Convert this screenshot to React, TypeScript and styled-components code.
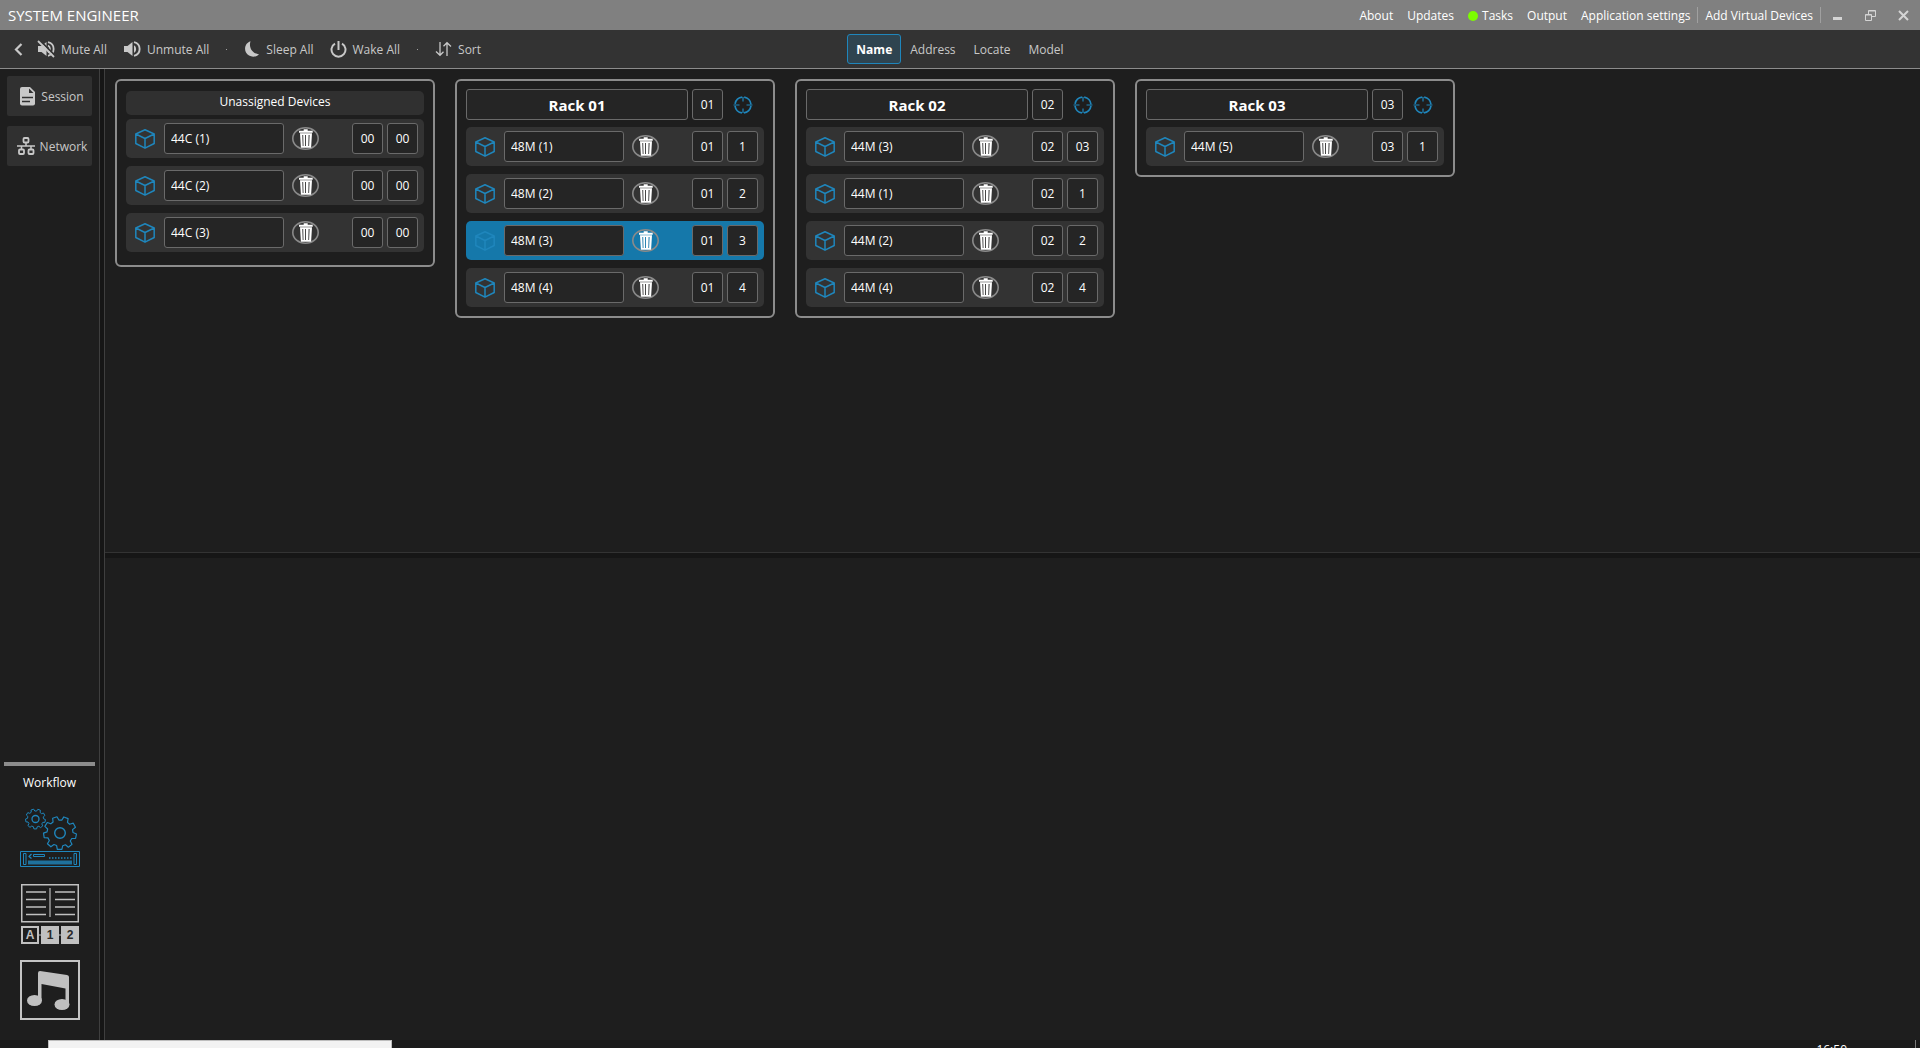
import React from "react";
import styled, { createGlobalStyle, css } from "styled-components";

const color = {
  page: "#1e1e1e",
  bar: "#333333",
  title: "#808080",
  field: "#252525",
  fieldBorder: "#6a6a6a",
  frame: "#8c8c8c",
  accent: "#1f86bc",
  selected: "#1578aa",
  line: "#3f3f3f",
  gutter: "#161616",
  text: "#ffffff",
  muted: "#c8c8c8",
};

const Global = createGlobalStyle`
  * { box-sizing: border-box; }
  html, body { margin: 0; background: ${color.page}; }
  body, button, input {
    font-family: "Open Sans", "Noto Sans", sans-serif;
    font-size: 12px;
    line-height: 16px;
    color: ${color.text};
  }
  svg { display: block; flex: none; }
`;

const Window = styled.div`
  display: flex;
  flex-direction: column;
  height: 100vh;
  overflow: hidden;
`;

/* Title bar */

const TitleBar = styled.header`
  display: flex;
  align-items: center;
  justify-content: space-between;
  flex: none;
  height: 30px;
  padding-left: 8px;
  background: ${color.title};
`;

const AppTitle = styled.h1`
  margin: 0;
  font-size: 15px;
  line-height: 20px;
  font-weight: 400;
`;

const Menu = styled.nav`
  display: flex;
  align-items: center;
`;

const MenuItem = styled.button`
  display: flex;
  align-items: center;
  gap: 4px;
  padding: 2px 7px 0;
  border: 0;
  background: none;
  white-space: nowrap;
`;

const StatusDot = styled.span`
  width: 10px;
  height: 10px;
  border-radius: 50%;
  background: #7cfc00;
`;

const MenuDivider = styled.span`
  width: 1px;
  height: 16px;
  background: #a0a0a0;
`;

const WindowButton = styled.button`
  display: flex;
  align-items: center;
  justify-content: center;
  width: 33px;
  height: 30px;
  padding: 0;
  border: 0;
  background: none;
  color: #d4d4d4;
`;

/* Toolbar */

const Toolbar = styled.div`
  display: grid;
  grid-template-columns: 1fr auto 1fr;
  align-items: center;
  flex: none;
  height: 39px;
  padding: 0 8px;
  background: ${color.bar};
  border-bottom: 1px solid ${color.frame};
`;

const Actions = styled.div`
  display: flex;
  align-items: center;
`;

const ActionButton = styled.button`
  display: flex;
  align-items: center;
  gap: 6px;
  padding: 0 8px;
  border: 0;
  background: none;
  color: ${color.muted};
  white-space: nowrap;
`;

const BackButton = styled(ActionButton)`
  padding: 0 6px;
`;

const Label = styled.span`
  padding-top: 2px;
`;

const Dot = styled.span`
  width: 1px;
  height: 1px;
  margin: 0 9px;
  background: #a0a0a0;
`;

const Tabs = styled.div`
  display: flex;
  align-items: center;
`;

const Tab = styled.button<{ $active?: boolean }>`
  height: 30px;
  padding: 2px 8px 0;
  border: 1px solid transparent;
  border-radius: 3px;
  background: none;
  color: ${color.muted};
  ${(p) =>
    p.$active &&
    css`
      border-color: ${color.accent};
      background: #2f4450;
      color: ${color.text};
      font-weight: 700;
    `}
`;

/* Body */

const Body = styled.div`
  display: flex;
  flex: 1;
  min-height: 0;
`;

const Sidebar = styled.aside`
  display: flex;
  flex-direction: column;
  flex: none;
  width: 99px;
  padding: 7px 4px 20px;
`;

const SideNav = styled.nav`
  display: flex;
  flex-direction: column;
  gap: 10px;
  padding: 0 3px;
`;

const SideButton = styled.button`
  display: flex;
  align-items: center;
  justify-content: center;
  gap: 5px;
  height: 40px;
  padding: 0 0 0 5px;
  border: 0;
  border-radius: 2px;
  background: #303030;
  color: ${color.muted};
`;

const Workflow = styled.section`
  display: flex;
  flex-direction: column;
  align-items: center;
  margin-top: auto;
  border-top: 4px solid ${color.frame};
`;

const WorkflowTitle = styled.h2`
  margin: 9px 0 17px;
  font-size: 12px;
  line-height: 16px;
  font-weight: 400;
`;

const WorkflowList = styled.div`
  display: flex;
  flex-direction: column;
  gap: 16px;
`;

const WorkflowButton = styled.button`
  padding: 0;
  border: 0;
  background: none;
`;

const SideGutter = styled.div`
  flex: none;
  width: 6px;
  border: solid ${color.line};
  border-width: 0 1px;
  background: ${color.gutter};
`;

const Main = styled.main`
  display: grid;
  grid-template-rows: minmax(0, 1fr) 6px minmax(0, 1fr);
  flex: 1;
  min-width: 0;
`;

const RackArea = styled.section`
  display: flex;
  flex-wrap: wrap;
  align-items: flex-start;
  align-content: flex-start;
  gap: 20px;
  padding: 10px;
`;

const RowGutter = styled.div`
  border-top: 1px solid #333333;
  background: ${color.gutter};
`;

const DetailArea = styled.section`
  background: ${color.page};
`;

/* Racks */

const Card = styled.article<{ $plain?: boolean }>`
  width: 320px;
  padding: ${(p) => (p.$plain ? "10px 9px 13px" : "8px 9px 9px")};
  border: 2px solid ${color.frame};
  border-radius: 6px;
`;

const PlainHeader = styled.h3`
  margin: 0 0 4px;
  padding: 3px 0 5px;
  border-radius: 5px;
  background: #303030;
  font-size: 12px;
  line-height: 16px;
  font-weight: 400;
  text-align: center;
`;

const RackHeader = styled.div`
  display: flex;
  align-items: center;
  gap: 4px;
  margin-bottom: 7px;
`;

const Field = styled.input`
  height: 31px;
  padding: 0 6px;
  border: 1px solid ${color.fieldBorder};
  border-radius: 3px;
  background: ${color.field};
  outline: none;
`;

const RackName = styled(Field)`
  flex: 1;
  min-width: 0;
  font-size: 15px;
  font-weight: 700;
  text-align: center;
`;

const DeviceName = styled(Field)`
  width: 120px;
`;

const NumberField = styled(Field)`
  width: 31px;
  padding: 0;
  text-align: center;
`;

const IconButton = styled.button`
  display: flex;
  align-items: center;
  justify-content: center;
  padding: 0;
  border: 0;
  background: none;
`;

const LocateButton = styled(IconButton)`
  width: 31px;
  height: 31px;
  margin-right: 6px;
`;

const DeviceList = styled.ul`
  display: flex;
  flex-direction: column;
  gap: 8px;
  margin: 0;
  padding: 0;
  list-style: none;
`;

const DeviceRow = styled.li<{ $selected?: boolean }>`
  display: flex;
  align-items: center;
  gap: 8px;
  padding: 4px 6px 4px 9px;
  border-radius: 5px;
  background: ${(p) => (p.$selected ? color.selected : color.bar)};
`;

const Address = styled.div`
  display: flex;
  gap: 4px;
  margin-left: auto;
`;

/* Strip under the window */

const Taskbar = styled.footer`
  display: flex;
  align-items: flex-start;
  justify-content: space-between;
  flex: none;
  height: 8px;
  padding: 0 4px 0 48px;
  overflow: hidden;
  background: #1a1a1a;
`;

const SearchBox = styled.input`
  width: 344px;
  height: 32px;
  border: 1px solid #bdbdbd;
  background: #f2f2f2;
  outline: none;
`;

const Tray = styled.div`
  height: 40px;
  padding-right: 68px;
  border-right: 1px solid #7a7a7a;
`;

const Clock = styled.time`
  display: block;
  padding-top: 2px;
`;

/* Icons */

const MuteIcon = () => (
  <svg width="18" height="18" viewBox="0 0 18 18" fill="none" stroke="currentColor" strokeWidth="1.800">
    <path d="M1 6h3.500L9.500 2v14L4.500 12H1z" fill="currentColor" stroke="none" />
    <path d="M11 5.500c2.600 1.500 2.600 5.500 0 7M11 2.200c7.500 1.800 7.500 11.800 0 13.600" />
    <path d="M2.500 0l15.500 15.500" stroke={color.bar} strokeWidth="1.800" />
    <path d="M1 1l16 16" />
  </svg>
);

const UnmuteIcon = () => (
  <svg width="18" height="18" viewBox="0 0 18 18" fill="none" stroke="currentColor">
    <path d="M1 6h3.500L9.500 2v14L4.500 12H1z" fill="currentColor" stroke="none" />
    <path d="M11 5.200c2.800 1.400 2.800 6.200 0 7.600z" fill="currentColor" stroke="none" />
    <path d="M11 2.200c7.500 1.800 7.500 11.800 0 13.600" strokeWidth="1.900" />
  </svg>
);

const MoonIcon = () => (
  <svg width="16" height="16" viewBox="0 0 16 16" fill="currentColor">
    <path d="M6.500.3C4.500 6 8 13 15 13.200 11.500 17 4.500 16.300 2 11.500-.3 7 1.800 1.800 6.500.3z" />
  </svg>
);

const PowerIcon = () => (
  <svg width="17" height="17" viewBox="0 0 17 17" fill="none" stroke="currentColor" strokeWidth="2">
    <path d="M8.500 0v9M5 2.600a7 7 0 1 0 7 0" />
  </svg>
);

const SortIcon = () => (
  <svg width="17" height="16" viewBox="0 0 17 16" fill="none" stroke="currentColor" strokeWidth="1.300">
    <path d="M5 1v13M1 10.500L5 14.300 8.500 10.800M12 15V2M8.500 5.300L12 1.700 16 5.500" />
  </svg>
);

const BackIcon = () => (
  <svg width="9" height="13" viewBox="0 0 9 13" fill="none" stroke="currentColor" strokeWidth="2.200">
    <path d="M7.500 1L2 6.500 7.500 12" />
  </svg>
);

const SessionIcon = () => (
  <svg width="16" height="19" viewBox="0 0 16 19">
    <path d="M2 0h8l5 5v11.500a2 2 0 0 1-2 2H2a2 2 0 0 1-2-2V2a2 2 0 0 1 2-2z" fill={color.muted} />
    <path d="M9 1.500v4.500h4.500z" fill="#303030" />
    <path d="M2 10.500h11M2 14.500h8" fill="none" stroke="#303030" strokeWidth="1.500" />
  </svg>
);

const NetworkIcon = () => (
  <svg width="18" height="18" viewBox="0 0 18 18" fill="none" stroke={color.muted} strokeWidth="1.800">
    <rect x="6.500" y="1" width="5" height="4.500" rx="1" />
    <rect x="2" y="12.500" width="5" height="4.500" rx="1" />
    <rect x="11.500" y="12.500" width="5" height="4.500" rx="1" />
    <path d="M9 5.500V9M0 9h18M4.500 9v3.500M14 9v3.500" strokeWidth="1.500" />
  </svg>
);

const CubeIcon = () => (
  <svg width="21" height="20" viewBox="0 0 21 20" fill="none" stroke={color.accent} strokeWidth="1.500" strokeLinejoin="round">
    <path d="M10 .8L19.200 5v9.500L10 19.200.8 14.500V5zM.8 5L10 9.500 19.200 5M10 9.500v9.700" />
  </svg>
);

const TrashIcon = () => (
  <svg width="27" height="23" viewBox="0 0 27 23">
    <ellipse cx="13.500" cy="11.500" rx="12.700" ry="10.700" fill="none" stroke="#8a8a8a" strokeWidth="1.600" />
    <path d="M11.700 2.300h4v1.500h5v2H7v-2h4.700z" fill="#fff" />
    <path
      fill="#fff"
      fillRule="evenodd"
      d="M8 6.300h12l-.9 14.400H8.900zM10.300 8l.4 11h.8l-.3-11zM13 8v11h.9V8zM16.600 8l-.3 11h.8l.5-11z"
    />
  </svg>
);

const TargetIcon = () => (
  <svg width="20" height="20" viewBox="0 0 20 20" fill="none" stroke={color.accent}>
    <circle cx="10" cy="10" r="8" strokeWidth="1.700" strokeDasharray="10.560 2" strokeDashoffset="-1" />
    <path d="M10 2v4.500M10 13.500V18M.5 10h6M13.500 10h6" strokeWidth="1.200" />
  </svg>
);

const gearPath = (cx: number, cy: number, inner: number, outer: number, teeth: number) => {
  const step = (Math.PI * 2) / teeth;
  const points: string[] = [];
  for (let i = 0; i < teeth; i += 1) {
    [
      [-0.34, inner],
      [-0.2, outer],
      [0.2, outer],
      [0.34, inner],
    ].forEach(([offset, radius]) => {
      const angle = (i + offset) * step + 0.2;
      points.push(`${(cx + Math.cos(angle) * radius).toFixed(2)},${(cy + Math.sin(angle) * radius).toFixed(2)}`);
    });
  }
  return `M${points.join("L")}Z`;
};

const DevicesIcon = () => (
  <svg width="60" height="60" viewBox="0 0 60 60" fill="none" stroke={color.accent} strokeLinejoin="round">
    <path d={gearPath(15.5, 11, 8, 10, 9)} />
    <circle cx="15.500" cy="11" r="3.500" strokeWidth="1.300" />
    <path d={gearPath(40, 25, 13, 16.5, 9)} strokeWidth="1.200" />
    <circle cx="40" cy="25" r="5.300" strokeWidth="1.400" />
    <rect x=".5" y="43.500" width="59" height="15" />
    <path d="M3.500 45.500h2.500v11H3.500zM54 45.500h2.500v11H54zM13.500 46.500h11v2h-11z" />
    <path d="M11.500 46L9 48.500l2.500 2" strokeWidth="1.300" />
    <path d="M29 50h23" strokeDasharray="1.500 1.500" strokeWidth="1.300" />
    <path d="M8 54.500h44" strokeWidth="4" opacity=".8" />
  </svg>
);

const ScenesIcon = () => (
  <svg width="60" height="60" viewBox="0 0 60 60" fill="none" stroke="#c0c0c0">
    <rect x="1.750" y=".75" width="56.500" height="37" strokeWidth="1.500" />
    <path d="M6 8h20M6 15.500h20M6 23h20M6 30.500h20M35 8h20M35 15.500h20M35 23h20M35 30.500h20" strokeWidth="1.600" />
    <path d="M30 4v29" stroke="#7c7c7c" strokeWidth="2" />
    <path d="M18 51h24" />
    <rect x="2" y="43" width="16" height="16" fill={color.page} strokeWidth="2" />
    <rect x="21" y="42" width="18" height="18" fill="#c0c0c0" stroke="none" />
    <rect x="41" y="42" width="18" height="18" fill="#c0c0c0" stroke="none" />
    <g stroke="none" fontFamily="Liberation Sans, sans-serif" fontSize="12" fontWeight="700" textAnchor="middle">
      <text x="10" y="55" fill="#c0c0c0">A</text>
      <text x="30" y="55" fill="#2a2a2a">1</text>
      <text x="50" y="55" fill="#2a2a2a">2</text>
    </g>
  </svg>
);

const MusicIcon = () => (
  <svg width="60" height="60" viewBox="0 0 60 60">
    <rect x="1" y="1" width="58" height="58" fill="none" stroke="#c4c4c4" strokeWidth="2" />
    <path d="M18 13q0-2 2-2l27 4q2 .5 2 2v27h-3.500V28.500L21.500 24v17H18z" fill="#c0c0c0" />
    <ellipse cx="14.500" cy="40.500" rx="7.500" ry="5.500" fill="#c0c0c0" />
    <ellipse cx="42" cy="44.500" rx="7.500" ry="5.500" fill="#c0c0c0" />
  </svg>
);

/* Data */

type Device = { name: string; rack: string; slot: string; selected?: boolean };
type Rack = { name: string; id: string; devices: Device[] };

const unassigned: Device[] = [
  { name: "44C (1)", rack: "00", slot: "00" },
  { name: "44C (2)", rack: "00", slot: "00" },
  { name: "44C (3)", rack: "00", slot: "00" },
];

const racks: Rack[] = [
  {
    name: "Rack 01",
    id: "01",
    devices: [
      { name: "48M (1)", rack: "01", slot: "1" },
      { name: "48M (2)", rack: "01", slot: "2" },
      { name: "48M (3)", rack: "01", slot: "3", selected: true },
      { name: "48M (4)", rack: "01", slot: "4" },
    ],
  },
  {
    name: "Rack 02",
    id: "02",
    devices: [
      { name: "44M (3)", rack: "02", slot: "03" },
      { name: "44M (1)", rack: "02", slot: "1" },
      { name: "44M (2)", rack: "02", slot: "2" },
      { name: "44M (4)", rack: "02", slot: "4" },
    ],
  },
  { name: "Rack 03", id: "03", devices: [{ name: "44M (5)", rack: "03", slot: "1" }] },
];

const Devices = ({ items }: { items: Device[] }) => (
  <DeviceList>
    {items.map((d) => (
      <DeviceRow key={d.name} $selected={d.selected}>
        <CubeIcon />
        <DeviceName aria-label="Device name" defaultValue={d.name} />
        <IconButton aria-label={`Delete ${d.name}`}>
          <TrashIcon />
        </IconButton>
        <Address>
          <NumberField aria-label="Rack number" defaultValue={d.rack} />
          <NumberField aria-label="Slot number" defaultValue={d.slot} />
        </Address>
      </DeviceRow>
    ))}
  </DeviceList>
);

export default function App() {
  return (
    <Window>
      <Global />
      <TitleBar>
        <AppTitle>SYSTEM ENGINEER</AppTitle>
        <Menu>
          <MenuItem>About</MenuItem>
          <MenuItem>Updates</MenuItem>
          <MenuItem>
            <StatusDot />
            Tasks
          </MenuItem>
          <MenuItem>Output</MenuItem>
          <MenuItem>Application settings</MenuItem>
          <MenuDivider />
          <MenuItem>Add Virtual Devices</MenuItem>
          <MenuDivider />
          <WindowButton aria-label="Minimize">
            <svg width="10" height="10" viewBox="0 0 10 10">
              <path d="M0 8.500h9" stroke="currentColor" strokeWidth="3" />
            </svg>
          </WindowButton>
          <WindowButton aria-label="Restore">
            <svg width="11" height="11" viewBox="0 0 11 11" fill="none" stroke="currentColor">
              <path d="M.5 4.500h6v6h-6zM.5 5h6M3.500 4V.5h7v6H7M3.500 1h7" />
            </svg>
          </WindowButton>
          <WindowButton aria-label="Close">
            <svg width="11" height="11" viewBox="0 0 11 11">
              <path d="M1 1l9 9M10 1l-9 9" stroke="currentColor" strokeWidth="2" />
            </svg>
          </WindowButton>
        </Menu>
      </TitleBar>

      <Toolbar>
        <Actions>
          <BackButton aria-label="Back">
            <BackIcon />
          </BackButton>
          <ActionButton>
            <MuteIcon />
            <Label>Mute All</Label>
          </ActionButton>
          <ActionButton>
            <UnmuteIcon />
            <Label>Unmute All</Label>
          </ActionButton>
          <Dot />
          <ActionButton>
            <MoonIcon />
            <Label>Sleep All</Label>
          </ActionButton>
          <ActionButton>
            <PowerIcon />
            <Label>Wake All</Label>
          </ActionButton>
          <Dot />
          <ActionButton>
            <SortIcon />
            <Label>Sort</Label>
          </ActionButton>
        </Actions>
        <Tabs>
          <Tab $active>Name</Tab>
          <Tab>Address</Tab>
          <Tab>Locate</Tab>
          <Tab>Model</Tab>
        </Tabs>
      </Toolbar>

      <Body>
        <Sidebar>
          <SideNav>
            <SideButton>
              <SessionIcon />
              <Label>Session</Label>
            </SideButton>
            <SideButton>
              <NetworkIcon />
              <Label>Network</Label>
            </SideButton>
          </SideNav>
          <Workflow>
            <WorkflowTitle>Workflow</WorkflowTitle>
            <WorkflowList>
              <WorkflowButton aria-label="Devices">
                <DevicesIcon />
              </WorkflowButton>
              <WorkflowButton aria-label="Scenes">
                <ScenesIcon />
              </WorkflowButton>
              <WorkflowButton aria-label="Music">
                <MusicIcon />
              </WorkflowButton>
            </WorkflowList>
          </Workflow>
        </Sidebar>
        <SideGutter />
        <Main>
          <RackArea>
            <Card $plain>
              <PlainHeader>Unassigned Devices</PlainHeader>
              <Devices items={unassigned} />
            </Card>
            {racks.map((rack) => (
              <Card key={rack.id}>
                <RackHeader>
                  <RackName aria-label="Rack name" defaultValue={rack.name} />
                  <NumberField aria-label="Rack number" defaultValue={rack.id} />
                  <LocateButton aria-label={`Locate ${rack.name}`}>
                    <TargetIcon />
                  </LocateButton>
                </RackHeader>
                <Devices items={rack.devices} />
              </Card>
            ))}
          </RackArea>
          <RowGutter />
          <DetailArea />
        </Main>
      </Body>

      <Taskbar>
        <SearchBox aria-label="Search" />
        <Tray>
          <Clock>16:50</Clock>
        </Tray>
      </Taskbar>
    </Window>
  );
}
